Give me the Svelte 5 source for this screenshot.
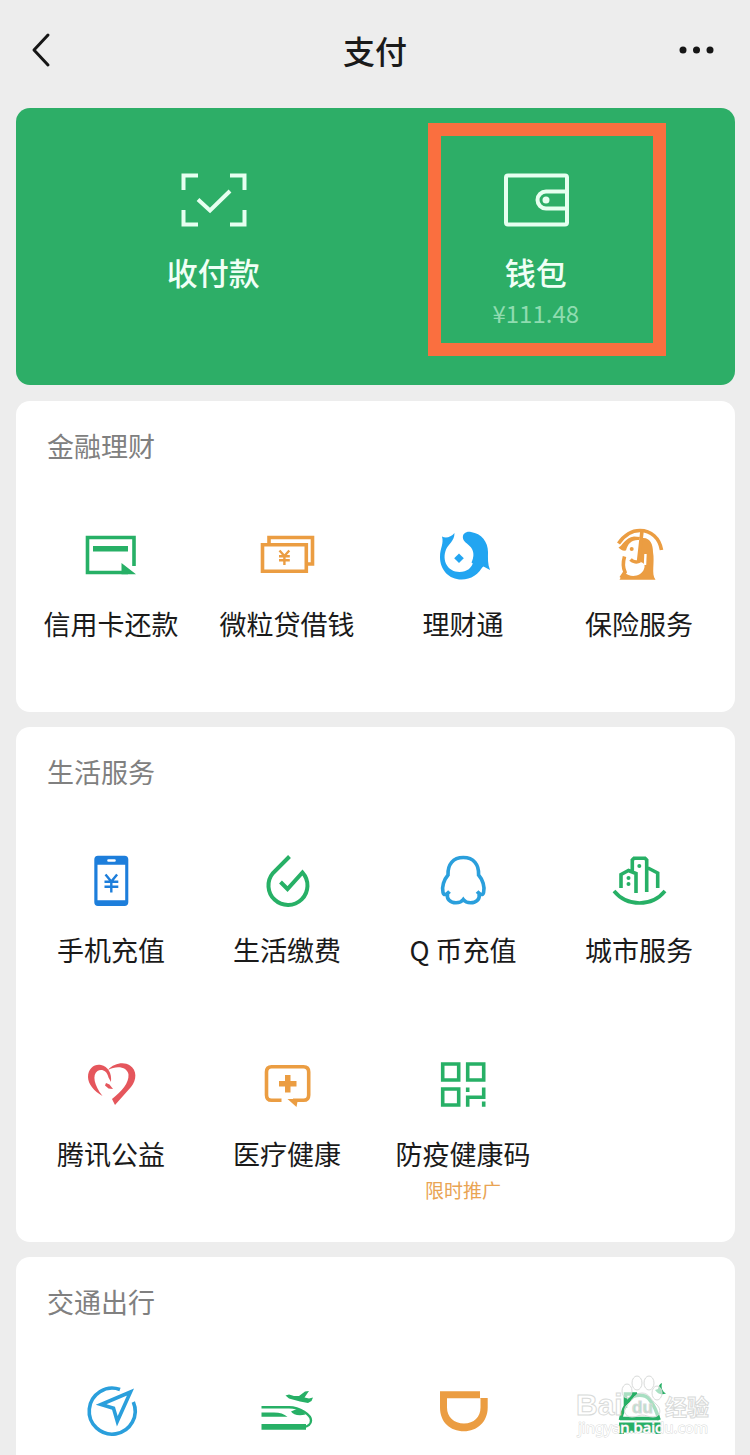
<script>
  const sections = [
    {
      title: '金融理财',
      items: [
        { icon: 'card', label: '信用卡还款' },
        { icon: 'cash', label: '微粒贷借钱' },
        { icon: 'fish', label: '理财通' },
        { icon: 'insurance', label: '保险服务' }
      ]
    },
    {
      title: '生活服务',
      items: [
        { icon: 'phone', label: '手机充值' },
        { icon: 'drop', label: '生活缴费' },
        { icon: 'penguin', label: 'Q 币充值' },
        { icon: 'city', label: '城市服务' },
        { icon: 'heart', label: '腾讯公益' },
        { icon: 'medical', label: '医疗健康' },
        { icon: 'qr', label: '防疫健康码', note: '限时推广' }
      ]
    },
    {
      title: '交通出行',
      items: [{ icon: 'compass' }, { icon: 'train' }, { icon: 'ride' }, { icon: 'taxi' }]
    }
  ];
</script>

{#snippet glyph(name)}
  <svg class="glyph {name}" viewBox="0 0 54 54" aria-hidden="true">
    {#if name === 'card'}
      <path class="line" d="M50 38V9.5H3.5V44.5H44" />
      <path class="solid" d="M9 18H44V23.5H9zM37.5 35L52 46.200H37.5z" />
    {:else if name === 'cash'}
      <path class="line" d="M9 15V9.5H52.5V36H48" />
      <path class="line" d="M2.5 16.8H46.3V43.3H2.5z" />
      <path class="thin" d="M19.5 22.5L24.4 28L29.3 22.5M24.4 28V37M19 28.3H29.8M19 32.3H29.8" />
    {:else if name === 'fish'}
      <path class="solid" d="M6 8.500C10 11 15 9 18.500 5C18.500 13 12.500 16 10 21.500C5.500 33 12 44 23.500 44C31 44 36 40 37.500 33L47.500 37C43 46.500 35 51.500 25.500 51.500C13 51.500 4 42 4 29C4 20 8 16 6 8.500z" />
      <path class="solid" d="M27 10.500C26 5 31 3 35 4C45.500 5.500 52 14 52 24C52 30 51.500 36 54 42L47.500 38.500L44 41L35.500 34.500C38 29 38 25 36 21C33.500 16 28 15 27 10.500z" />
      <path class="solid" d="M23 25.500L27.800 30.300L23 35.100L18.200 30.300z" />
    {:else if name === 'insurance'}
      <path class="line" d="M6.500 15.500C13 6 20 2.500 28 2.500C39 2.500 47.500 10 49.500 22" />
      <path class="solid" d="M6.500 19.500C10 18.500 13 9.500 22 8.500L28 9L27 12C20 11.500 16 15 14 22.500C11 23 8.500 22 6.500 19.500z" />
      <path class="line" d="M12.500 28.500C11 34 11 40 13 44L9 50" />
      <path class="solid" d="M30 10C38 9 41 16 41 24C43 35 39 46 43.500 51.700H7.500C9 49 11 47 12.500 44.500C18 50 29 49 32 41C34 36 31 34.500 27.500 33.500z" />
      <path class="line" d="M30 3L26.500 34M18.500 31.500C21 34 25 34.500 28 33" />
      <path class="thin gap" d="M33.500 26L33 37" />
      <circle class="solid" cx="19.700" cy="21" r="2" />
    {:else if name === 'phone'}
      <path class="solid" fill-rule="evenodd" d="M14 1.700H40.500Q44.300 1.700 44.300 5.500V48.300Q44.300 52 40.500 52H14Q10.300 52 10.300 48.300V5.500Q10.300 1.700 14 1.700zM13.500 10.700V46.300H41.200V10.700zM24.500 5.200a1.300 1.300 0 0 0 0 2.600H30.500a1.300 1.300 0 0 0 0-2.600z" />
      <path class="thin" d="M21.500 20.500L27.300 27.500L33.100 20.500M27.300 27.500V38.500M20.500 27.700H34.300M20.500 32.700H34.300" />
    {:else if name === 'drop'}
      <path class="line" d="M29.500 2.500L13 19A19.500 19.500 0 1 0 42.500 18.500L27.500 35L20.500 28" />
    {:else if name === 'penguin'}
      <path class="line" d="M27.300 3.500C17 3.500 11.500 10.500 12 21C8 25.500 5.500 33 7 38.500C8 42 11 40.500 13.500 37.500M11.500 40C10.500 45 14 48.800 20 48.800C24 48.800 26 47.300 27.300 45.500C28.600 47.300 30.600 48.800 34.600 48.800C40.600 48.800 44.100 45 43.100 40M41.100 37.500C43.600 40.500 46.600 42 47.600 38.500C49.100 33 46.600 25.500 42.600 21C43.100 10.500 37.600 3.500 27.300 3.500" />
    {:else if name === 'city'}
      <path class="line" d="M2 37C15 53 40 53 53 37M9 34V20.500L16.500 16.500L24 19.500V39M20.300 17V6L22 4.300H33L34.700 6V38M36 14L45.700 19V34" />
      <circle class="solid" cx="27.300" cy="12" r="2" />
      <circle class="solid" cx="16.500" cy="24" r="2" />
      <circle class="solid" cx="16.500" cy="30" r="2" />
    {:else if name === 'heart'}
      <path class="solid" d="M18.500 38C10 33 4 26 4 19C4 10 11 5.500 17 7C24 8.500 28 15 27 24L24.500 19.500C23 12 17 10.500 13.500 13C8 17 10 27 18.500 38z" />
      <path class="solid" d="M24 12C30 5 40 3.500 46 7.500C53 12 53 22 47 29L31 47L28 41C38 33 45 25 44.500 16.500C43.500 9 33 7 24 12z" />
      <path class="solid" d="M22 25L25.500 26.500L29 31L24.500 30.500L21 27.500z" />
    {:else if name === 'medical'}
      <path class="line" d="M21.500 42.300H11.500Q6.500 42.300 6.500 37V14Q6.500 8.700 11.500 8.700H43.500Q48.700 8.700 48.700 14V37Q48.700 42.300 43.500 42.300H33" />
      <path class="solid" d="M27.500 41H38L36.500 49zM25 17H30.500V23H36.500V28.500H30.500V34.500H25V28.500H19V23H25z" />
    {:else if name === 'qr'}
      <path class="line" d="M6.700 6H22.700V22H6.700zM31.700 6H47.700V22H31.700zM6.700 31H22.700V47H6.700zM31.700 48.700V39.300H47.700V29.500M31.700 29.500V34M47.700 43.500V48.700" />
    {:else if name === 'compass'}
      <path class="line" d="M36 5.500A23 23 0 1 0 49.300 18M46.500 8L17 20.500L29.500 24.300L33.300 37.300z" />
    {:else if name === 'train'}
      <path class="thin" d="M1.500 23.300H29C40 23.300 51 31 51 36.500C51 40 48 42.500 44 43" />
      <path class="solid" d="M1.500 40H46V45.700H1.500zM1.500 28.500H14C20 28.500 24 30 27.500 32.700H1.500zM31 27.500L38 24.500C42 26 44 28 45.500 30.500C39 32 33 31 31 27.500z" />
      <path class="solid" d="M25.500 11.500L29 10.500L34 12L39 12L45 7.500L49 7L44.500 13.500L49 14.500L53 13.500L51.500 17L48 19L40 17.500L29 14.500z" />
    {:else if name === 'ride'}
      <path class="solid" fill-rule="evenodd" d="M4 7.300H44V14H51.700V23.500C51.700 38 41 47.300 28 47.300C14 47.300 4 38 4 23.500zM11 14.300V23.500C11 33 18 39.500 28 39.500C38 39.500 44.500 33 44.500 23.500V14.300z" />
    {:else if name === 'taxi'}
      <path class="line" d="M8.500 36C10 27 14 20 18 15C22 10 33 10 37 15C42 21 45 28 47 36M13.500 24V10H25M8 34.500H47" />
      <path class="solid" d="M7 38.500H48.500V50H43.500V48.500H12V50H7zM46 5Q47 0 50 -1Q48 6 54 9.500Q47 12 43 6z" />
    {/if}
  </svg>
{/snippet}

<div class="page">
  <header>
    <button class="nav" aria-label="返回">
      <svg width="20" height="36" viewBox="0 0 20 36" aria-hidden="true">
        <path d="M17 3L3 18L17 33" fill="none" stroke="#161616" stroke-width="3" stroke-linecap="round" stroke-linejoin="round" />
      </svg>
    </button>
    <h1>支付</h1>
    <button class="nav" aria-label="更多">
      <svg width="36" height="36" viewBox="0 0 36 36" fill="#161616" aria-hidden="true">
        <circle cx="4" cy="18" r="3.500" />
        <circle cx="17.500" cy="18" r="3.500" />
        <circle cx="31" cy="18" r="3.500" />
      </svg>
    </button>
  </header>

  <main>
    <div class="hero">
      <button class="entry">
        <svg width="66" height="54" viewBox="0 0 66 54" aria-hidden="true">
          <path d="M3.500 17V2.500H18M50 2.500H64.500V17M64.500 37V51.500H50M18 51.500H3.500V37" />
          <path d="M18 26.500L30 37.500L50 18" />
        </svg>
        <span class="name">收付款</span>
      </button>
      <button class="entry">
        <svg width="66" height="54" viewBox="0 0 66 54" aria-hidden="true">
          <rect x="3" y="2.500" width="61" height="49" rx="2" />
          <path d="M64 18.500H43A8.500 8.500 0 0 0 43 35.500H64" />
          <circle cx="43" cy="27" r="3.500" class="dot" />
        </svg>
        <span class="name">钱包</span>
        <span class="amount">¥111.48</span>
        <span class="frame"></span>
      </button>
    </div>

    {#each sections as section}
      <section>
        <h2>{section.title}</h2>
        <div class="grid">
          {#each section.items as item}
            <button class="item">
              {@render glyph(item.icon)}
              {#if item.label}
                <span class="label">{item.label}</span>
              {/if}
              {#if item.note}
                <span class="note">{item.note}</span>
              {/if}
            </button>
          {/each}
        </div>
      </section>
    {/each}
  </main>

  <svg class="mark" width="150" height="76" viewBox="0 0 150 76" aria-hidden="true">
    <g class="paw">
      <ellipse cx="55" cy="20" rx="5" ry="7" />
      <ellipse cx="65" cy="12" rx="5" ry="7" />
      <ellipse cx="77" cy="12" rx="5" ry="7" />
      <ellipse cx="85" cy="22" rx="5" ry="7" />
      <path d="M70 22C63 22 61 29 56 33C50 38 52 46 60 46C65 46 67 44 70 44C74 44 76 46 81 46C89 46 90 38 84 33C79 29 77 22 70 22z" />
    </g>
    <text x="4" y="44" class="brand">Bai</text>
    <text x="60" y="42" class="du">du</text>
    <text x="93" y="44" class="cjk">经验</text>
    <text x="6" y="62" class="site">jingyan.baidu.com</text>
  </svg>
</div>

<style>
  :global(body) {
    margin: 0;
    background: #ededed;
  }
  .page {
    position: relative;
    display: flex;
    flex-direction: column;
    min-height: 100vh;
    overflow: hidden;
    font-family: 'Noto Sans CJK SC', 'Noto Sans', sans-serif;
    color: #1a1a1a;
  }
  button {
    padding: 0;
    border: 0;
    background: none;
    color: inherit;
    font: inherit;
    cursor: pointer;
  }
  svg {
    display: block;
  }
  header {
    display: flex;
    align-items: center;
    justify-content: space-between;
    height: 100px;
    padding: 0 31px;
    margin-bottom: 8px;
  }
  .nav {
    display: flex;
    width: 40px;
  }
  h1 {
    margin: 0;
    font-size: 32px;
    line-height: 40px;
    font-weight: 500;
  }
  main {
    flex: 1;
    display: flex;
    flex-direction: column;
    gap: 15px;
    padding: 0 15px 0 16px;
  }
  .hero {
    display: grid;
    grid-template-columns: 1fr 1fr;
    height: 277px;
    padding: 0 38px 0 36px;
    border-radius: 14px;
    background: #2dae67;
    margin-bottom: 1px;
  }
  .entry {
    position: relative;
    display: flex;
    flex-direction: column;
    align-items: center;
    padding-top: 65px;
    color: #f0fff6;
  }
  .entry svg {
    fill: none;
    stroke: #e6fff0;
    stroke-width: 4;
    overflow: visible;
  }
  .entry svg .dot {
    fill: #e6fff0;
    stroke: none;
  }
  .name {
    margin-top: 25px;
    font-size: 31px;
    line-height: 40px;
    font-weight: 500;
  }
  .amount {
    margin-top: 5px;
    font-size: 24px;
    line-height: 32px;
    color: #8fdcb0;
  }
  .frame {
    position: absolute;
    top: 15px;
    left: 53px;
    width: 238px;
    height: 233px;
    box-sizing: border-box;
    border: 13px solid #fa6f3f;
  }
  section {
    padding: 29px 8px 72px 7px;
    border-radius: 14px;
    background: #fff;
  }
  section:last-child {
    flex: 1;
    padding-bottom: 16px;
    border-radius: 14px 14px 0 0;
  }
  h2 {
    margin: 0 24px;
    font-size: 27px;
    line-height: 32px;
    font-weight: 400;
    color: #808080;
  }
  .grid {
    display: grid;
    grid-template-columns: repeat(4, 1fr);
    row-gap: 92px;
    margin-top: 66px;
  }
  .item {
    position: relative;
    display: flex;
    flex-direction: column;
    align-items: center;
  }
  .label {
    margin-top: 26px;
    font-size: 27px;
    line-height: 32px;
    white-space: nowrap;
  }
  .note {
    position: absolute;
    top: 120px;
    font-size: 19px;
    line-height: 24px;
    color: #e9a453;
  }
  .glyph {
    width: 54px;
    height: 54px;
    overflow: visible;
    color: #27b066;
  }
  .line,
  .thin {
    fill: none;
    stroke: currentColor;
    stroke-width: 3.6;
  }
  .thin {
    stroke-width: 2.4;
  }
  .solid {
    fill: currentColor;
  }
  .drop .line {
    stroke-width: 4;
  }
  .gap {
    stroke: #fff;
  }
  .cash,
  .insurance,
  .medical,
  .ride {
    color: #eb9d42;
  }
  .fish {
    color: #22a5f1;
  }
  .phone {
    color: #1d7edb;
  }
  .penguin,
  .compass {
    color: #2a9fdc;
  }
  .heart {
    color: #e5565c;
  }
  .mark {
    position: absolute;
    top: 1371px;
    right: 28px;
    pointer-events: none;
  }
  .paw,
  .mark text {
    fill: rgba(255, 255, 255, 0.6);
    stroke: #d8dad9;
    stroke-width: 1;
  }
  .brand {
    font: 700 30px 'Liberation Sans', sans-serif;
  }
  .mark .du {
    font: 700 17px 'Liberation Sans', sans-serif;
    fill: rgba(39, 176, 102, 0.35);
  }
  .cjk {
    font: 700 22px 'Noto Sans CJK SC', sans-serif;
  }
  .mark .site {
    font: 400 15px 'Noto Sans', sans-serif;
    fill: #fff;
    paint-order: stroke;
  }
</style>
